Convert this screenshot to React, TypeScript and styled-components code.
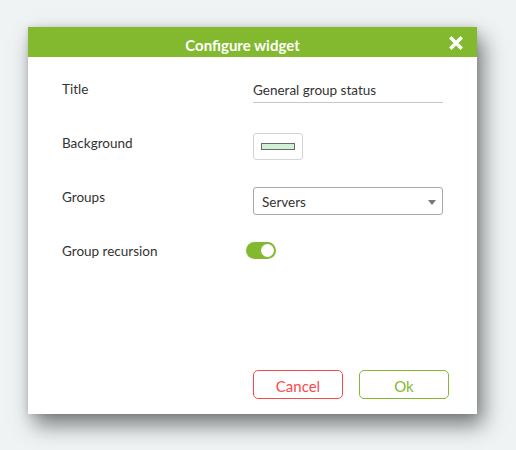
import React from "react";
import styled, { createGlobalStyle } from "styled-components";

const Global = createGlobalStyle`
  html, body { margin: 0; padding: 0; background: #eff3f4; }
  body { font-family: Lato, "Open Sans", sans-serif; }
`;

const Page = styled.div`
  width: 516px;
  height: 450px;
  padding: 27px 0 0 28px;
  box-sizing: border-box;
`;

const Dialog = styled.div`
  width: 449px;
  height: 387px;
  background: #fff;
  display: flex;
  flex-direction: column;
  box-shadow: 6px 11px 20px rgba(0, 0, 0, 0.5), 0 0 6px rgba(0, 0, 0, 0.12);
`;

const Header = styled.div`
  height: 30px;
  background: #82b92e;
  display: flex;
  align-items: center;
  position: relative;
`;

const HeaderTitle = styled.div`
  flex: 1;
  text-align: center;
  color: #fff;
  font-weight: 700;
  font-size: 15px;
  padding: 6px 20px 0 0;
`;

const CloseButton = styled.button`
  position: absolute;
  right: 14px;
  top: 9px;
  width: 14px;
  height: 14px;
  padding: 0;
  border: none;
  background: transparent;
  display: flex;
`;

const Body = styled.div`
  display: grid;
  grid-template-columns: 191px 190px;
  grid-auto-rows: 54px;
  padding: 5px 0 0 34px;
  align-items: center;
`;

const Label = styled.div`
  font-size: 13.5px;
  color: #333;
  margin-top: -1px;
`;

const TextInput = styled.div`
  height: 26px;
  border-bottom: 1px solid #c8c8c8;
  font-size: 13.5px;
  color: #333;
  display: flex;
  align-items: center;
  padding-top: 1px;
  box-sizing: border-box;
  margin-top: 1px;
`;

const ColorButton = styled.div`
  width: 50px;
  height: 27px;
  border: 1px solid #d4d4d4;
  border-radius: 3px;
  box-sizing: border-box;
  display: flex;
  align-items: center;
  justify-content: center;
  margin-top: 7px;
`;

const Swatch = styled.div<{ $color: string }>`
  width: 34px;
  height: 7px;
  background: ${(p) => p.$color};
  border: 1px solid #6a6a6a;
  box-sizing: border-box;
`;

const Select = styled.div`
  height: 28px;
  border: 1px solid #a8a8a8;
  border-radius: 3px;
  box-sizing: border-box;
  display: flex;
  align-items: center;
  justify-content: space-between;
  padding: 2px 6px 0 8px;
  font-size: 13.5px;
  color: #333;
  margin-top: 8px;
`;

const Arrow = styled.span`
  width: 0;
  height: 0;
  border-left: 4px solid transparent;
  border-right: 4px solid transparent;
  border-top: 5px solid #777;
`;

const Toggle = styled.div<{ $on: boolean }>`
  width: 30px;
  height: 17px;
  border-radius: 9px;
  background: ${(p) => (p.$on ? "#82b92e" : "#ccc")};
  margin-left: -7px;
  margin-top: -1px;
  position: relative;
`;

const Knob = styled.span<{ $on: boolean }>`
  position: absolute;
  top: 2px;
  left: ${(p) => (p.$on ? "15px" : "2px")};
  width: 13px;
  height: 13px;
  border-radius: 50%;
  background: #fff;
`;

const Footer = styled.div`
  margin-top: auto;
  display: flex;
  justify-content: flex-end;
  gap: 16px;
  padding: 0 28px 15px 0;
`;

const Button = styled.button<{ $color: string }>`
  width: 90px;
  height: 29px;
  border: 1px solid ${(p) => p.$color};
  color: ${(p) => p.$color};
  background: #fff;
  border-radius: 5px;
  font-family: Lato, sans-serif;
  font-size: 15px;
  padding: 2px 0 0;
`;

export default function App() {
  return (
    <>
      <Global />
      <Page>
        <Dialog>
          <Header>
            <HeaderTitle>Configure widget</HeaderTitle>
            <CloseButton aria-label="close">
              <svg width="14" height="14" viewBox="0 0 14 14">
                <path d="M2.5 2.5 L11.5 11.5 M11.5 2.5 L2.5 11.5" stroke="#fff" strokeWidth="3.4" strokeLinecap="square" />
              </svg>
            </CloseButton>
          </Header>
          <Body>
            <Label>Title</Label>
            <TextInput>General group status</TextInput>
            <Label>Background</Label>
            <div>
              <ColorButton>
                <Swatch $color="#d2f0d3" />
              </ColorButton>
            </div>
            <Label>Groups</Label>
            <Select>
              Servers
              <Arrow />
            </Select>
            <Label>Group recursion</Label>
            <div>
              <Toggle $on>
                <Knob $on />
              </Toggle>
            </div>
          </Body>
          <Footer>
            <Button $color="#fb4a4a">Cancel</Button>
            <Button $color="#82b92e">Ok</Button>
          </Footer>
        </Dialog>
      </Page>
    </>
  );
}
